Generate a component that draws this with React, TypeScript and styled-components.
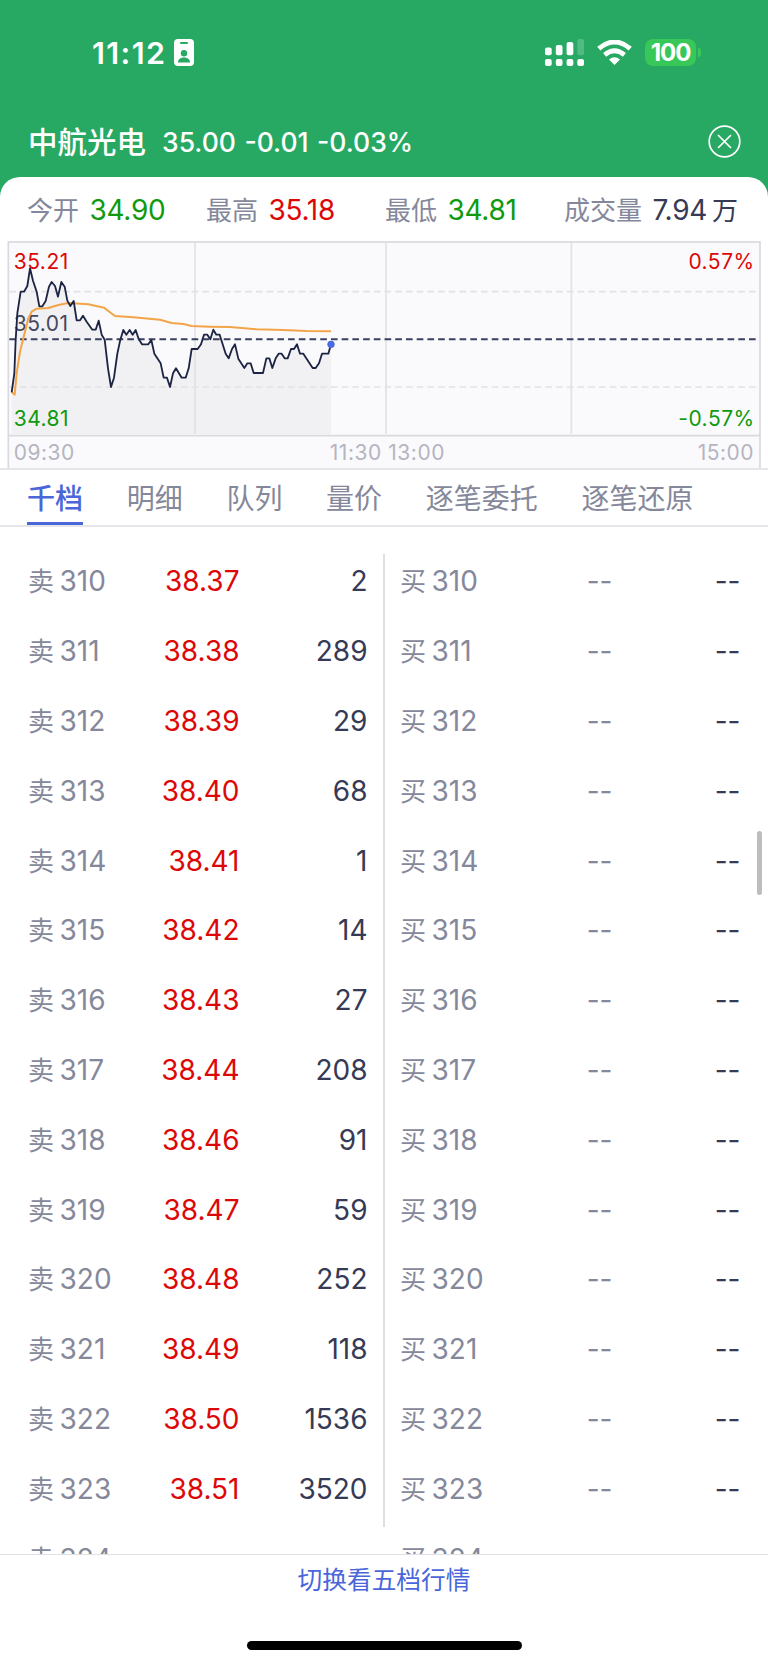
import React from "react";
import styled, { createGlobalStyle } from "styled-components";

const GlobalStyle = createGlobalStyle`
  *, *::before, *::after { box-sizing: border-box; }
  body {
    margin: 0;
    background: #fff;
    font-family: Inter, "Noto Sans CJK SC", sans-serif;
    -webkit-font-smoothing: antialiased;
  }
`;

const colors = {
  brand: "#27a963",
  grey: "#85889a",
  ink: "#363a55",
  up: "#dc0808",
  down: "#0f9a0f",
  blue: "#4a66d9",
  line: "#e6e6ea",
};

const Screen = styled.main`
  width: 768px;
  height: 1665px;
  display: flex;
  flex-direction: column;
  overflow: hidden;
  background: ${colors.brand};
`;

const StatusBar = styled.header`
  height: 105px;
  flex: none;
  display: flex;
  align-items: center;
  justify-content: space-between;
  padding: 0 67px 0 92px;
  color: #fff;
`;

const StatusGroup = styled.div<{ $gap: number }>`
  display: flex;
  align-items: center;
  gap: ${(p) => p.$gap}px;
`;

const Clock = styled.span`
  font-size: 30.5px;
  font-weight: 600;
  line-height: 36px;
  letter-spacing: 1.4px;
`;

const BatteryWrap = styled.div`
  display: flex;
  align-items: center;
  gap: 2px;
`;

const BatteryBody = styled.div`
  width: 51px;
  height: 27px;
  border-radius: 8px;
  background: #38c759;
  text-align: center;
  font-size: 24px;
  line-height: 28px;
  font-weight: 700;
  letter-spacing: -1px;
`;

const BatteryTip = styled.i`
  width: 3px;
  height: 9px;
  border-radius: 0 4px 4px 0;
  background: #38c759;
`;

const TitleBar = styled.div`
  height: 72px;
  flex: none;
  display: flex;
  align-items: center;
  padding: 0 27px 0 28px;
  color: #fff;
`;

const StockName = styled.h1`
  margin: 2px 16px 0 0;
  font-size: 29.5px;
  line-height: 40px;
  font-weight: 500;
`;

const Quote = styled.span`
  flex: 1;
  padding-top: 2px;
  font-size: 26.5px;
  line-height: 40px;
  font-weight: 500;
  word-spacing: 1.5px;
`;

const Panel = styled.section`
  flex: 1;
  min-height: 0;
  display: flex;
  flex-direction: column;
  border-radius: 20px 20px 0 0;
  background: #fff;
`;

const Stats = styled.div`
  height: 63px;
  flex: none;
  display: grid;
  grid-template-columns: repeat(4, 179px);
  align-items: center;
  padding: 4px 0 0 27px;
`;

const Stat = styled.div`
  display: flex;
  align-items: baseline;
  gap: 10.5px;
  line-height: 40px;
  white-space: nowrap;
`;

const StatLabel = styled.span`
  font-size: 26px;
  color: ${colors.grey};
`;

const StatValue = styled.span<{ $color: string }>`
  font-size: 28px;
  letter-spacing: -0.3px;
  color: ${(p) => p.$color};
`;

const ChartBox = styled.div`
  height: 230px;
  flex: none;
  border-bottom: 2px solid ${colors.line};
  svg { display: block; }
`;

const Tabs = styled.nav`
  height: 57px;
  flex: none;
  display: flex;
  gap: 43.7px;
  padding: 0 27px;
  border-bottom: 2px solid ${colors.line};
`;

const Tab = styled.span<{ $active?: boolean }>`
  height: 55px;
  border-bottom: 3px solid ${(p) => (p.$active ? colors.blue : "transparent")};
  color: ${(p) => (p.$active ? colors.blue : colors.grey)};
  font-size: 28px;
  font-weight: ${(p) => (p.$active ? 500 : 400)};
  line-height: 58px;
  white-space: nowrap;
`;

const Book = styled.div`
  position: relative;
  flex: 1;
  min-height: 0;
  overflow: hidden;
  display: grid;
  grid-template-columns: 383px 2px 383px;
  align-items: start;
`;

const Side = styled.div`
  padding-top: 19.5px;
`;

const Divider = styled.div`
  height: 973px;
  margin-top: 27px;
  background: #dfdfe3;
`;

const Row = styled.div<{ $buy?: boolean }>`
  height: 69.8px;
  display: grid;
  grid-template-columns: ${(p) => (p.$buy ? "108px 104.5px 128px" : "100px 111.5px 128px")};
  padding-left: ${(p) => (p.$buy ? 15 : 28)}px;
  align-items: center;
  font-size: 28px;
  line-height: 40px;
`;

const Level = styled.span`
  display: flex;
  align-items: baseline;
  gap: 5.5px;
  padding-top: 1px;
  letter-spacing: 0;
  color: ${colors.grey};
  white-space: nowrap;
`;

const Kind = styled.span`
  font-size: 26px;
`;

const Num = styled.span<{ $color: string }>`
  text-align: right;
  letter-spacing: 0;
  color: ${(p) => p.$color};
`;

const ScrollThumb = styled.i`
  position: absolute;
  top: 304px;
  right: 6px;
  width: 5px;
  height: 64px;
  border-radius: 3px;
  background: #bdbdbf;
`;

const Footer = styled.footer`
  height: 111px;
  flex: none;
  display: flex;
  flex-direction: column;
  align-items: center;
  justify-content: space-between;
  padding-bottom: 15px;
  border-top: 1px solid #e1e1e4;
  background: #fff;
`;

const SwitchLink = styled.span`
  font-size: 24.7px;
  line-height: 50px;
  color: ${colors.blue};
`;

const HomeBar = styled.i`
  width: 275px;
  height: 9px;
  border-radius: 5px;
  background: #000;
`;

const BadgeIcon = () => (
  <svg width="20" height="27" viewBox="0 0 20 27">
    <rect width="20" height="27" rx="4" fill="#fff" />
    <rect x="6" y="3" width="8" height="2" rx="1" fill={colors.brand} />
    <circle cx="10" cy="14.2" r="3.2" fill={colors.brand} />
    <path d="M4 23.5c0-3.6 2.7-5 6-5s6 1.400 6 5z" fill={colors.brand} />
  </svg>
);

const SignalIcon = () => (
  <svg width="39" height="27" viewBox="0 0 39 27" fill="#fff">
    <rect x="0" y="8.500" width="6.700" height="7.700" rx="2" />
    <rect x="10.800" y="6" width="6.700" height="10.200" rx="2" />
    <rect x="21.600" y="3" width="6.700" height="13.200" rx="2" />
    <rect x="32.300" y="0" width="6.700" height="16.200" rx="2" opacity=".2" />
    {[0, 10.8, 21.6, 32.3].map((x) => (
      <rect key={x} x={x} y="20" width="6.700" height="7" rx="2" />
    ))}
  </svg>
);

const WifiIcon = () => (
  <svg width="35" height="25" viewBox="0 0 35 25" fill="none">
    <path d="M1.800 8.600Q17.500 -4.600 33.200 8.600" stroke="#fff" strokeWidth="5" />
    <path d="M7.600 14.800Q17.500 6.600 27.400 14.800" stroke="#fff" strokeWidth="4.800" />
    <path d="M12 19.400Q17.500 15 23 19.400L17.500 25z" fill="#fff" />
  </svg>
);

const CloseIcon = () => (
  <svg width="33" height="33" viewBox="0 0 33 33" fill="none" stroke="#fff" strokeWidth="1.700">
    <circle cx="16.500" cy="16.500" r="15.300" />
    <path d="M10 10l13 13M23 10l-13 13" />
  </svg>
);

const pricePoints =
  "35,487 43,430 47,330 52,250 62,185 72,185 82,168 90,115 99,152 110,185 118,229 127,229 137,213 147,170 155,156 165,168 174,200 184,156 194,170 202,212 211,228 221,213 230,271 240,271 249,257 260,275 277,299 287,299 296,272 305,314 314,329 324,415 333,471 342,443 352,371 361,329 370,300 379,314 389,300 398,314 407,300 416,327 426,343 445,343 454,330 463,371 482,400 491,443 501,443 510,471 519,430 528,415 545,443 557,443 566,415 575,357 593,357 603,343 612,314 622,314 631,328 640,299 649,314 659,314 677,371 686,385 696,357 705,343 715,386 733,414 742,400 752,400 761,429 789,429 799,385 808,385 817,414 827,385 836,371 845,371 854,385 863,385 873,357 882,357 891,343 900,371 910,371 938,414 947,414 957,400 966,371 985,371 993,343";

const averagePoints =
  "36,487 44,494 50,430 60,365 70,325 85,265 95,245 110,236 145,234 175,225 205,219 265,223 312,233 325,243 345,258 400,262 480,269 515,279 550,282 575,288 630,290 690,291 770,298 850,300 920,303 993,304";

const ChartText = styled.text`
  font-size: 63px;
  letter-spacing: 1.5px;
`;

const chartLabels = [
  { x: 41, y: 117, text: "35.21", color: colors.up },
  { x: 41, y: 302, text: "35.01", color: "#444860" },
  { x: 41, y: 587, text: "34.81", color: colors.down },
  { x: 2264, y: 117, text: "0.57%", color: colors.up, end: true },
  { x: 2264, y: 587, text: "-0.57%", color: colors.down, end: true },
  { x: 41, y: 689, text: "09:30", color: "#b5b5bf" },
  { x: 1145, y: 689, text: "11:30", color: "#b5b5bf", end: true },
  { x: 1165, y: 689, text: "13:00", color: "#b5b5bf" },
  { x: 2262, y: 689, text: "15:00", color: "#b5b5bf", end: true },
];

const IntradayChart = () => (
  <svg width="768" height="228" viewBox="0 30 2304 684">
    <rect x="25" y="36" width="2255" height="690" fill="#fafafd" stroke="#d9d9de" strokeWidth="5" />
    <polygon points={`35,612 ${pricePoints} 993,612`} fill="#f1f1f3" />
    <g stroke="#e2e2e6" strokeWidth="5">
      <path d="M585 38V612M1158 38V612M1714 38V612" />
      <path d="M28 185H2268M28 471H2268" strokeDasharray="20 12.160" />
    </g>
    <path d="M25 617H2280" stroke="#d9d9de" strokeWidth="5" />
    {chartLabels.map((l) => (
      <ChartText key={l.text} x={l.x} y={l.y} fill={l.color} textAnchor={l.end ? "end" : "start"}>
        {l.text}
      </ChartText>
    ))}
    <path d="M28 328H2268" stroke="#3b4060" strokeWidth="6" strokeDasharray="20 12.160" />
    <polyline points={averagePoints} fill="none" stroke="#f3a448" strokeWidth="6" strokeLinejoin="round" />
    <polyline points={pricePoints} fill="none" stroke="#1e2444" strokeWidth="5.500" strokeLinejoin="round" />
    <circle cx="993" cy="343" r="11" fill="#4a6ae0" />
  </svg>
);

const asks: [number, string, string][] = [
  [310, "38.37", "2"],
  [311, "38.38", "289"],
  [312, "38.39", "29"],
  [313, "38.40", "68"],
  [314, "38.41", "1"],
  [315, "38.42", "14"],
  [316, "38.43", "27"],
  [317, "38.44", "208"],
  [318, "38.46", "91"],
  [319, "38.47", "59"],
  [320, "38.48", "252"],
  [321, "38.49", "118"],
  [322, "38.50", "1536"],
  [323, "38.51", "3520"],
  [324, "", ""],
];

const stats = [
  { label: "今开", value: "34.90", color: colors.down },
  { label: "最高", value: "35.18", color: colors.up },
  { label: "最低", value: "34.81", color: colors.down },
  { label: "成交量", value: "7.94", unit: "万", color: colors.ink },
];

const Unit = styled.span`
  margin-left: 5px;
  font-size: 26px;
`;

export default function App() {
  return (
    <Screen>
      <GlobalStyle />
      <StatusBar>
        <StatusGroup $gap={8}>
          <Clock>11:12</Clock>
          <BadgeIcon />
        </StatusGroup>
        <StatusGroup $gap={13}>
          <SignalIcon />
          <WifiIcon />
          <BatteryWrap>
            <BatteryBody>100</BatteryBody>
            <BatteryTip />
          </BatteryWrap>
        </StatusGroup>
      </StatusBar>
      <TitleBar>
        <StockName>中航光电</StockName>
        <Quote>35.00 -0.01 -0.03%</Quote>
        <CloseIcon />
      </TitleBar>
      <Panel>
        <Stats>
          {stats.map((s) => (
            <Stat key={s.label}>
              <StatLabel>{s.label}</StatLabel>
              <StatValue $color={s.color}>
                {s.value}
                {s.unit && <Unit>{s.unit}</Unit>}
              </StatValue>
            </Stat>
          ))}
        </Stats>
        <ChartBox>
          <IntradayChart />
        </ChartBox>
        <Tabs>
          {["千档", "明细", "队列", "量价", "逐笔委托", "逐笔还原"].map((t, i) => (
            <Tab key={t} $active={i === 0}>
              {t}
            </Tab>
          ))}
        </Tabs>
        <Book>
          <Side>
            {asks.map(([n, price, volume]) => (
              <Row key={n}>
                <Level>
                  <Kind>卖</Kind>
                  {n}
                </Level>
                <Num $color={colors.up}>{price}</Num>
                <Num $color={colors.ink}>{volume}</Num>
              </Row>
            ))}
          </Side>
          <Divider />
          <Side>
            {asks.map(([n, price]) => (
              <Row key={n} $buy>
                <Level>
                  <Kind>买</Kind>
                  {n}
                </Level>
                <Num $color={colors.grey}>{price && "--"}</Num>
                <Num $color={colors.ink}>{price && "--"}</Num>
              </Row>
            ))}
          </Side>
          <ScrollThumb />
        </Book>
        <Footer>
          <SwitchLink>切换看五档行情</SwitchLink>
          <HomeBar />
        </Footer>
      </Panel>
    </Screen>
  );
}
